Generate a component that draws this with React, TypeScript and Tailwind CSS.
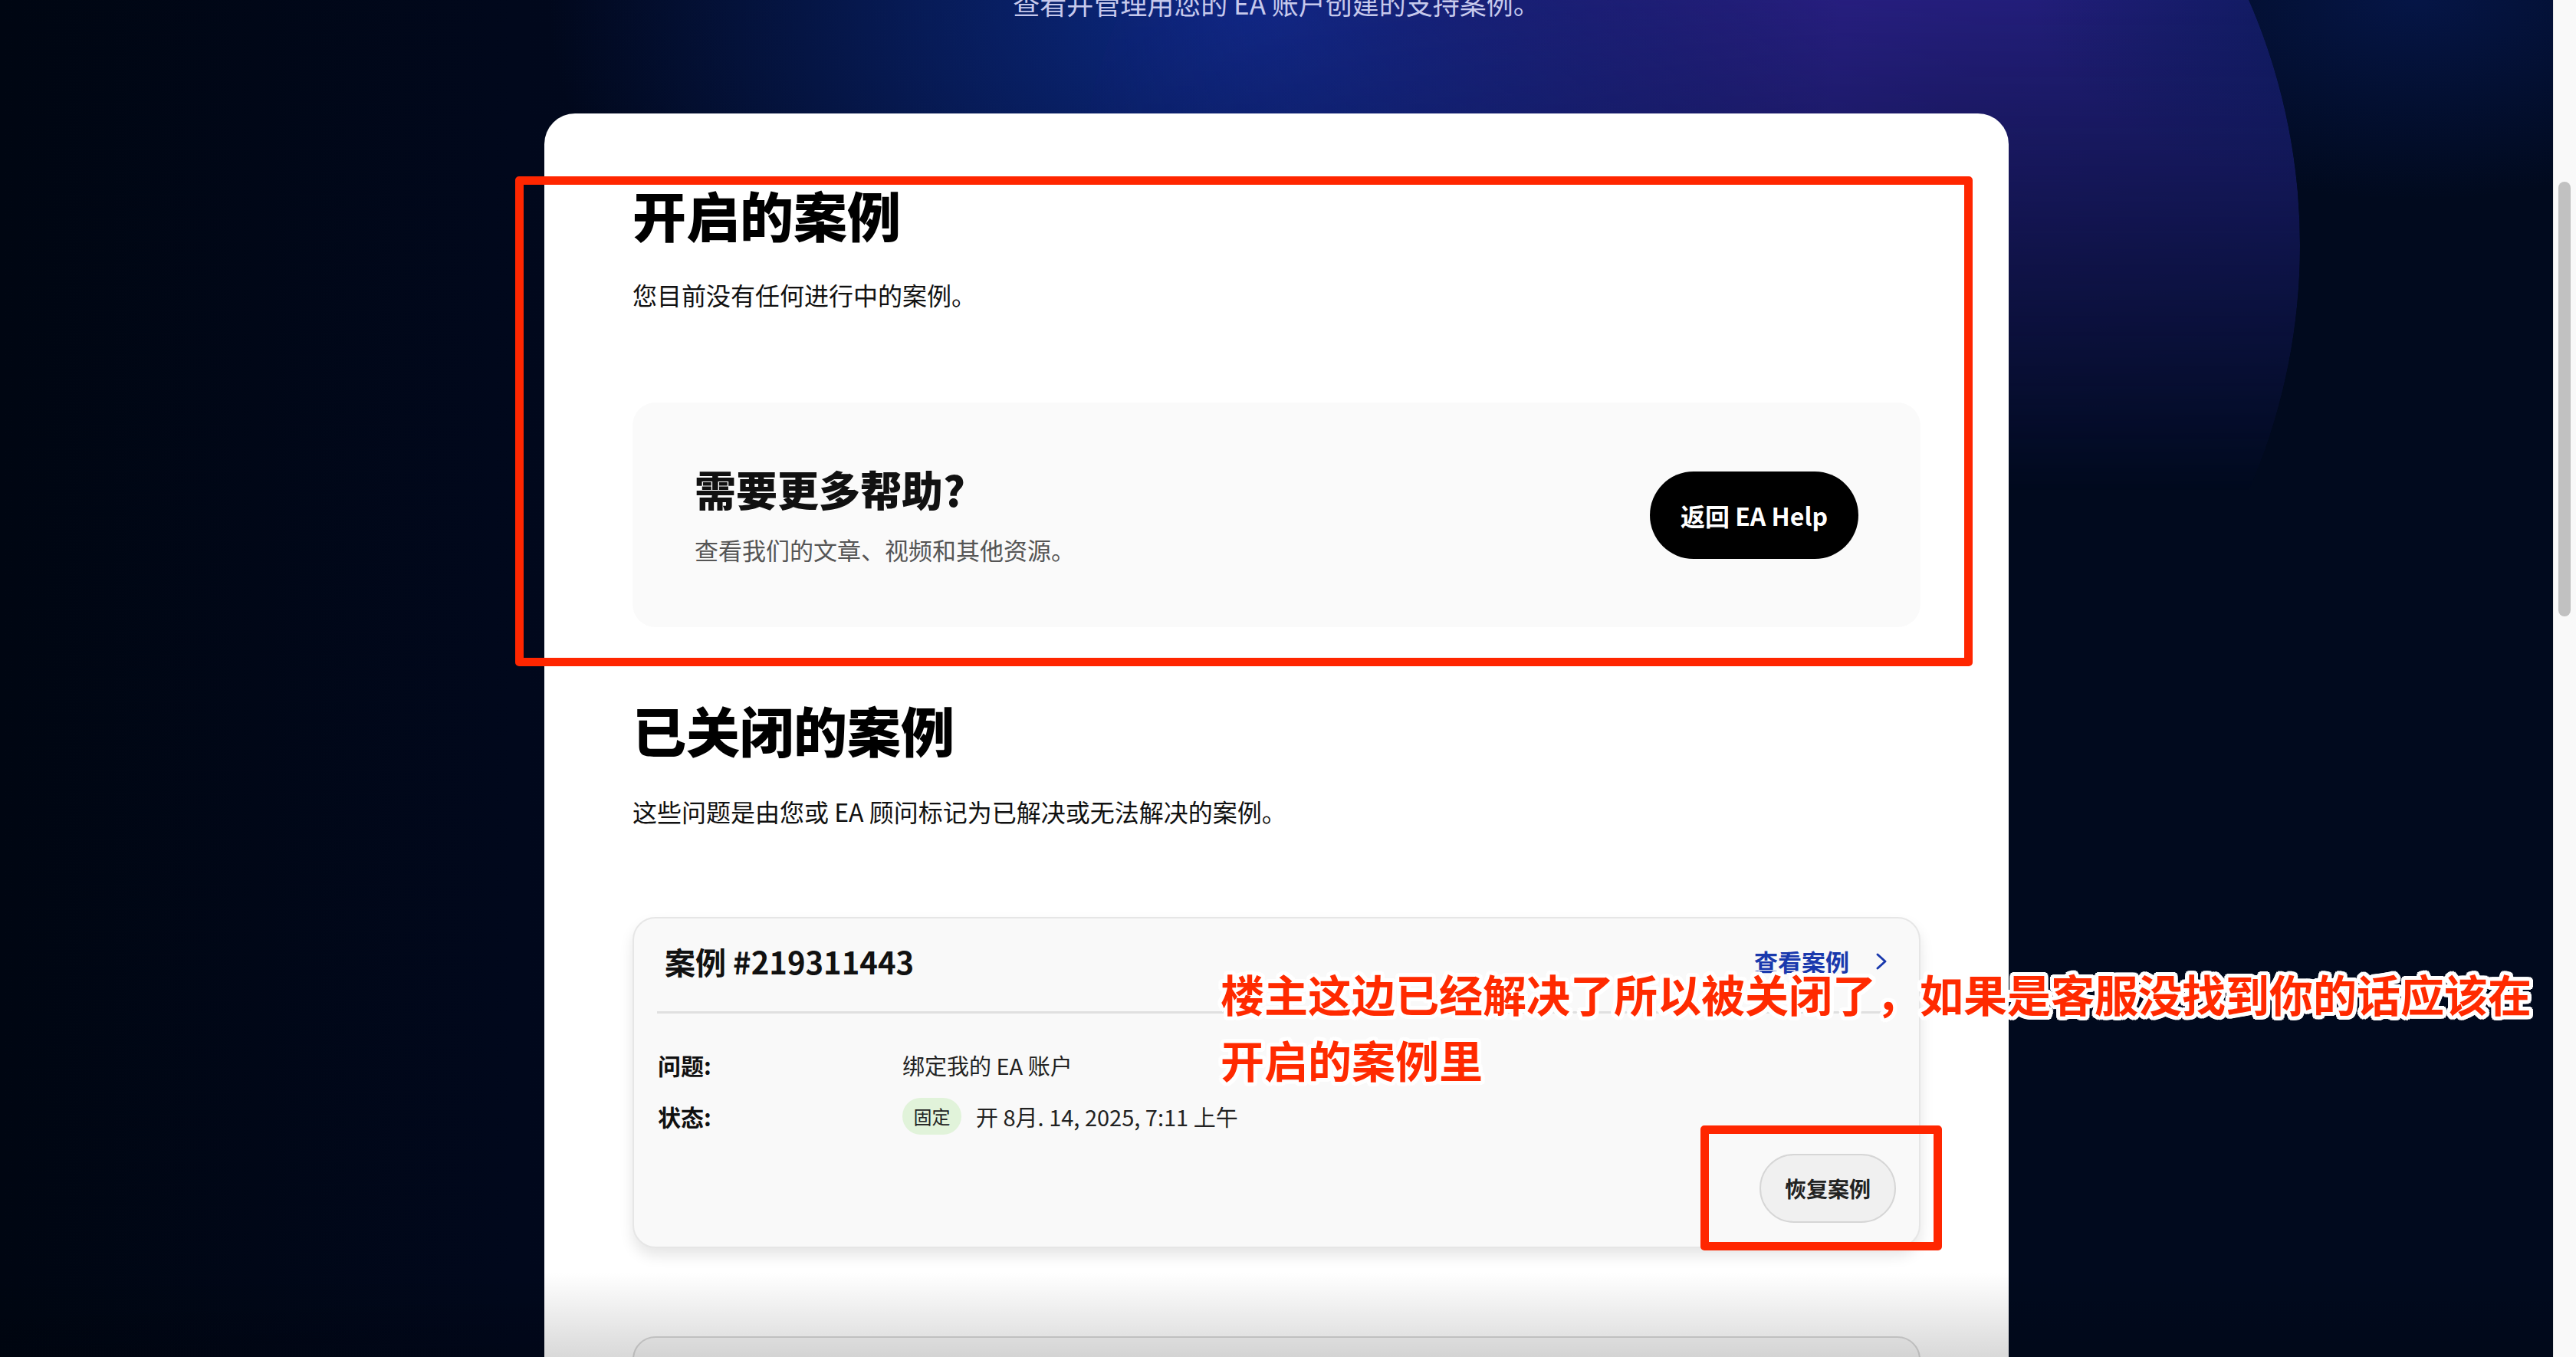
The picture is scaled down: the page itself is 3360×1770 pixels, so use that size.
import { Fragment } from 'react';

const FIELDS = [
  { label: '问题:', value: '绑定我的 EA 账户' },
];

const OUTLINE =
  '[text-shadow:5px_0_0_#fff,-5px_0_0_#fff,0_5px_0_#fff,0_-5px_0_#fff,4px_4px_0_#fff,-4px_4px_0_#fff,4px_-4px_0_#fff,-4px_-4px_0_#fff,2px_5px_0_#fff,-2px_5px_0_#fff,5px_2px_0_#fff,-5px_2px_0_#fff,2px_-5px_0_#fff,-2px_-5px_0_#fff,5px_-2px_0_#fff,-5px_-2px_0_#fff]';

function CaseCard() {
  return (
    <div className="mt-[114px] rounded-[30px] border-2 border-[#e6e6e6] bg-[#f9f9f9] px-[30px] pt-[32px] pb-[31px] shadow-[0_10px_18px_rgba(0,0,0,0.10)]">
      {/* header */}
      <div className="flex items-center justify-between">
        <h3 className="ml-[10px] text-[40px] leading-[48px] font-bold text-[#111]">案例 #219311443</h3>
        <a className="mr-[10px] flex items-center gap-[33px] text-[31px] leading-[40px] font-bold text-[#1a39ad]">
          查看案例
          <svg width="18" height="24" viewBox="0 0 18 24" fill="none">
            <polyline points="4,3 14,12 4,21" stroke="#1a39ad" strokeWidth="3" strokeLinecap="round" strokeLinejoin="round" />
          </svg>
        </a>
      </div>

      <div className="mt-[41px] h-[3px] bg-[#e0e0e0]" />

      {/* fields */}
      <div className="mt-[47px] flex flex-col gap-[23px]">
        {FIELDS.map((f) => (
          <Fragment key={f.label}>
            <div className="flex items-center">
              <span className="w-[320px] pl-[1px] text-[30px] leading-[40px] font-semibold text-[#111]">{f.label}</span>
              <span className="text-[29px] leading-[40px] text-[#222]">{f.value}</span>
            </div>
          </Fragment>
        ))}
        <div className="flex h-[48px] items-center">
          <span className="w-[320px] pl-[1px] text-[30px] leading-[40px] font-semibold text-[#111]">状态:</span>
          <span className="flex h-[48px] w-[77px] items-center justify-center rounded-full bg-[#e1f3da] text-[24px] text-[#222]">
            固定
          </span>
          <span className="ml-[19px] text-[29px] leading-[40px] text-[#222]">开 8月. 14, 2025, 7:11 上午</span>
        </div>
      </div>

      <div className="mt-[25px] flex justify-end">
        <button className="h-[90px] w-[178px] rounded-full border-2 border-[#d6d6d6] bg-[#f0f0f0] text-[28px] font-semibold text-[#222]">
          恢复案例
        </button>
      </div>
    </div>
  );
}

export default function App() {
  return (
    <div className="flex h-[1770px] w-[3360px] overflow-hidden font-['Noto_Sans_CJK_SC','Noto_Sans',sans-serif]">
      <main className="relative h-full flex-1 overflow-hidden bg-[#010a1e]">
        {/* backdrop */}
        <div className="pointer-events-none absolute inset-0 bg-[linear-gradient(90deg,#000612_0%,#01081c_20%,transparent_45%)]" />
        <div className="pointer-events-none absolute inset-0 bg-[radial-gradient(ellipse_1100px_700px_at_1650px_0px,#0c2a88_0%,rgba(12,42,136,0.55)_40%,transparent_85%)]" />
        <div className="pointer-events-none absolute top-[-480px] left-[1400px] h-[1600px] w-[1600px] rounded-full bg-[linear-gradient(95deg,transparent_0%,rgba(30,32,125,0.5)_25%,#281f82_60%,#1c1f78_100%)] [mask-image:linear-gradient(to_bottom,black_28%,transparent_70%)]" />
        <div className="pointer-events-none absolute inset-0 bg-[radial-gradient(ellipse_500px_260px_at_3150px_0px,rgba(6,24,80,0.8)_0%,transparent_100%)]" />

        <div className="relative flex flex-col items-center">
          <p className="mt-[-16px] text-[35px] leading-[40px] text-[#c6c9ec]">查看并管理用您的 EA 账户创建的支持案例。</p>

          <section className="mt-[124px] w-[1910px] rounded-t-[40px] bg-white px-[115px] pt-[90px] pb-[200px]">
            <h2 className="text-[70px] leading-[84px] font-black text-black">开启的案例</h2>
            <p className="mt-[38px] text-[32px] leading-[48px] text-[#111]">您目前没有任何进行中的案例。</p>

            <div className="mt-[117px] flex h-[293px] items-center justify-between rounded-[30px] bg-[#fafafa] px-[81px]">
              <div className="flex flex-col">
                <h3 className="text-[54px] leading-[64px] font-black text-[#111]">需要更多帮助?</h3>
                <p className="mt-[27px] text-[31px] leading-[40px] text-[#555]">查看我们的文章、视频和其他资源。</p>
              </div>
              <button className="h-[114px] w-[272px] rounded-full bg-black text-[32px] font-bold text-white">
                返回 EA Help
              </button>
            </div>

            <h2 className="mt-[92px] text-[70px] leading-[84px] font-black text-black">已关闭的案例</h2>
            <p className="mt-[40px] text-[32px] leading-[48px] text-[#111]">
              这些问题是由您或 EA 顾问标记为已解决或无法解决的案例。
            </p>

            <CaseCard />

            <div className="mt-[115px] h-[200px] rounded-t-[30px] border-2 border-[#d9d9d9] bg-[#f9f9f9]" />
          </section>
        </div>

        {/* bottom fade */}
        <div className="pointer-events-none absolute right-0 bottom-0 left-0 h-[110px] bg-gradient-to-b from-transparent to-black/15" />

        {/* annotations */}
        <div className="pointer-events-none absolute top-[230px] left-[672px] h-[639px] w-[1901px] rounded-[5px] border-[11px] border-[#ff2600]" />
        <div className="pointer-events-none absolute top-[1468px] left-[2218px] h-[163px] w-[315px] rounded-[5px] border-[11px] border-[#ff2600]" />
        <div className={`pointer-events-none absolute top-[1252px] left-[1592px] text-[57px] leading-[86px] font-bold whitespace-nowrap text-[#ff2a00] ${OUTLINE}`}>
          <div>楼主这边已经解决了所以被关闭了，如果是客服没找到你的话应该在</div>
          <div>开启的案例里</div>
        </div>
      </main>

      {/* scrollbar */}
      <div className="flex h-full w-[30px] flex-col border-l border-[#e8e8e8] bg-[#f9f9f9] pt-[237px]">
        <div className="ml-[6px] h-[567px] w-[16px] rounded-full bg-[#c1c1c1]" />
      </div>
    </div>
  );
}
